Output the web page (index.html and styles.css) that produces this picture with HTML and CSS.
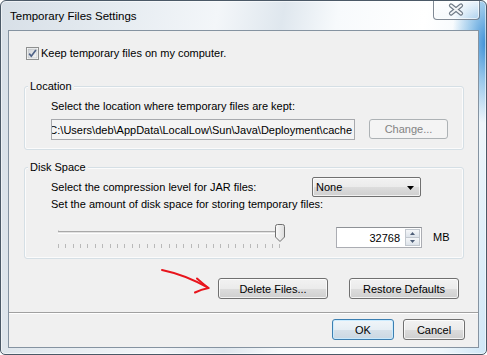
FILE: index.html
```html
<!DOCTYPE html>
<html lang="en">
<head>
    <meta charset="UTF-8">
    <title>Temporary Files Settings</title>
    <link rel="stylesheet" href="styles.css">
</head>
<body>
    <div class="window">
        <div class="titlebar">
            <span class="title">Temporary Files Settings</span>
            <div class="close">
                <svg width="45" height="19" viewBox="0 0 45 19">
                    <path d="M17 5.5L27 13.5M27 5.5L17 13.5" stroke="#6f7a86" stroke-width="4.2" stroke-linecap="round"/>
                    <path d="M17 5.5L27 13.5M27 5.5L17 13.5" stroke="#f3f5f7" stroke-width="2" stroke-linecap="round"/>
                </svg>
            </div>
        </div>

        <div class="client">
            <label class="check-row">
                <svg class="checkbox" width="13" height="13" viewBox="0 0 13 13">
                    <defs>
                        <linearGradient id="cbFill" x1="0" y1="0" x2="1" y2="1">
                            <stop offset="0" stop-color="#cfd2d6"/>
                            <stop offset="1" stop-color="#f6f6f6"/>
                        </linearGradient>
                    </defs>
                    <rect x="0.5" y="0.5" width="12" height="12" fill="#fff" stroke="#8e8f8f"/>
                    <rect x="2" y="2" width="9" height="9" fill="url(#cbFill)" stroke="#b4b8bc" stroke-width="0.6"/>
                    <path d="M3.2 6.6L5.3 9.2L9.9 3" fill="none" stroke="#4f6287" stroke-width="1.7"/>
                </svg>
                <span>Keep temporary files on my computer.</span>
            </label>

            <div class="group group-location">
                <div class="group-title">Location</div>
                <div class="line">Select the location where temporary files are kept:</div>
                <div class="loc-row">
                    <div class="field"><span>C:\Users\deb\AppData\LocalLow\Sun\Java\Deployment\cache</span></div>
                    <div class="btn btn-change is-disabled">Change...</div>
                </div>
            </div>

            <div class="group group-disk">
                <div class="group-title">Disk Space</div>
                <div class="jar-row">
                    <span>Select the compression level for JAR files:</span>
                    <div class="combo">
                        <span>None</span>
                        <svg width="7" height="4" viewBox="0 0 7 4"><path d="M0 0H7L3.5 4Z" fill="#000"/></svg>
                    </div>
                </div>
                <div class="line">Set the amount of disk space for storing temporary files:</div>
                <div class="space-row">
                    <svg class="slider" width="232" height="28" viewBox="0 0 232 28">
                        <defs>
                            <linearGradient id="thumbFill" x1="0" y1="0" x2="1" y2="0">
                                <stop offset="0" stop-color="#fbfbfb"/>
                                <stop offset="1" stop-color="#dcdcdc"/>
                            </linearGradient>
                        </defs>
                        <path d="M4.5 8.5V12" stroke="#b8b8b8"/>
                        <path d="M4 9.5H228" stroke="#a9a9a9"/>
                        <path d="M4 10.5H228" stroke="#e2e2e2"/>
                        <path d="M4 11.5H228" stroke="#fdfdfd"/>
                        <path d="M4.5 22v4M11.5 22v4M19.5 22v4M26.5 22v4M33.5 22v4M41.5 22v4M48.5 22v4M56.5 22v4M63.5 22v4M70.5 22v4M78.5 22v4M85.5 22v4M93.5 22v4M100.5 22v4M107.5 22v4M115.5 22v4M122.5 22v4M129.5 22v4M137.5 22v4M144.5 22v4M152.5 22v4M159.5 22v4M166.5 22v4M174.5 22v4M181.5 22v4M189.5 22v4M196.5 22v4M203.5 22v4M211.5 22v4M218.5 22v4M225.5 22v4" stroke="#b9b9b9"/>
                        <path d="M221.5 4.5Q221.5 2.5 223.5 2.5H228.5Q230.5 2.5 230.5 4.5V15L226 19.5L221.5 15Z" fill="url(#thumbFill)" stroke="#707070"/>
                    </svg>
                    <div class="spin">
                        <span class="spin-value">32768</span>
                        <div class="spin-buttons">
                            <div class="spin-btn"><svg width="5" height="3" viewBox="0 0 5 3"><path d="M0 3H5L2.5 0Z" fill="#4d5d77"/></svg></div>
                            <div class="spin-btn"><svg width="5" height="3" viewBox="0 0 5 3"><path d="M0 0H5L2.5 3Z" fill="#4d5d77"/></svg></div>
                        </div>
                    </div>
                    <span class="unit">MB</span>
                </div>
            </div>

            <div class="file-actions">
                <button class="btn btn-wide">Delete Files...</button>
                <button class="btn btn-wide">Restore Defaults</button>
            </div>

            <div class="separator"></div>

            <div class="dialog-actions">
                <button class="btn btn-small is-default">OK</button>
                <button class="btn btn-small">Cancel</button>
            </div>
        </div>

        <!-- red annotation arrow drawn over the dialog -->
        <svg class="annotation" width="487" height="355" viewBox="0 0 487 355">
            <path d="M162 270Q186 275 208.5 288" fill="none" stroke="#e8141c" stroke-width="2" stroke-linecap="round"/>
            <path d="M197 278.5Q203 284 208.5 288Q201 289.5 195 292.5" fill="none" stroke="#e8141c" stroke-width="2" stroke-linecap="round" stroke-linejoin="round"/>
        </svg>
    </div>
</body>
</html>
```

FILE: styles.css
```css
body {
    margin: 0;
    font-family: "Liberation Sans", Arial, sans-serif;
    font-size: 11px;
    color: #000;
    background: #fff;
}

.window {
    position: relative;
    box-sizing: border-box;
    width: 487px;
    height: 355px;
    padding: 0 7px 6px 7px;
    border: 1px solid #4b5967;
    border-radius: 6px 6px 5px 5px;
    background:
        radial-gradient(ellipse 34px 80px at 100% 12%, #3e90d6 0%, rgba(90, 165, 222, 0.6) 45%, rgba(255, 255, 255, 0) 100%),
        linear-gradient(100deg, #d7dfe7 0%, #e6ecf1 22%, #f3f6f9 40%, #dfe7ee 52%, #f7fafc 62%, #ffffff 78%, #eef6fb 92%, #cfe6f6 100%);
    box-shadow: inset 0 0 0 1px rgba(255, 255, 255, 0.55);
    overflow: hidden;
}

.titlebar {
    display: flex;
    justify-content: space-between;
    align-items: flex-start;
    height: 29px;
}

.title {
    margin: 8px 0 0 2px;
    font-size: 11.5px;
    line-height: 14px;
}

.close {
    box-sizing: border-box;
    width: 47px;
    height: 20px;
    margin: -1px -1px 0 0;
    border: 1px solid rgba(62, 76, 92, 0.65);
    border-top: none;
    border-radius: 0 0 4px 4px;
    background: linear-gradient(rgba(255, 255, 255, 0.75), rgba(235, 242, 248, 0.35));
    box-shadow: inset 0 0 0 1px rgba(255, 255, 255, 0.6);
}

.close svg {
    display: block;
}

.client {
    box-sizing: border-box;
    height: 318px;
    border: 1px solid #8593a1;
    background: #f0f0f0;
}

.line {
    margin: 1px 0 0 26px;
    line-height: 13px;
}

/* checkbox */
.check-row {
    display: flex;
    align-items: center;
    gap: 2px;
    height: 13px;
    margin: 16px 0 0 17px;
    line-height: 13px;
}

.checkbox {
    display: block;
}

/* group boxes */
.group {
    box-sizing: border-box;
    width: 440px;
    margin-left: 15px;
    border: 1px solid #d5dfe5;
    border-radius: 3px;
    box-shadow: inset 0 0 0 1px #fbfbfb;
}

.group-title {
    width: fit-content;
    height: 13px;
    margin: -7px 0 0 3px;
    padding: 0 2px;
    line-height: 13px;
    background: #f0f0f0;
}

.group-location {
    margin-top: 26px;
    padding-bottom: 9px;
}

.group-location .line {
    margin-top: 7px;
}

.loc-row {
    display: flex;
    align-items: flex-start;
    margin: 6px 0 0 26px;
}

.field {
    box-sizing: border-box;
    display: flex;
    justify-content: flex-end;
    align-items: center;
    width: 304px;
    height: 21px;
    padding-right: 2px;
    border: 1px solid #a7a9ad;
    background: #f4f4f4;
    white-space: nowrap;
    overflow: hidden;
}

.group-disk {
    margin-top: 17px;
    padding-bottom: 8px;
}

.jar-row {
    display: grid;
    grid-template-columns: 261px 109px;
    align-items: center;
    height: 20px;
    margin: 3px 0 0 26px;
}

.combo {
    box-sizing: border-box;
    display: flex;
    justify-content: space-between;
    align-items: center;
    height: 20px;
    padding: 0 6px 0 3px;
    border: 1px solid #707070;
    border-radius: 2px;
    background: linear-gradient(#f2f2f2 0%, #ebebeb 50%, #dddddd 50%, #cfcfcf 100%);
    box-shadow: inset 0 0 0 1px rgba(255, 255, 255, 0.7);
}

.combo svg {
    display: block;
    margin-top: 1px;
}

.space-row {
    display: flex;
    align-items: flex-start;
    height: 28px;
    margin: 11px 0 0 29px;
}

.slider {
    display: block;
}

.spin {
    box-sizing: border-box;
    display: flex;
    align-items: stretch;
    width: 86px;
    height: 21px;
    margin: 5px 0 0 50px;
    border: 1px solid #abadb3;
    border-top-color: #8e9196;
    background: #fff;
}

.spin-value {
    flex: 1;
    align-self: center;
    padding-right: 5px;
    text-align: right;
}

.spin-buttons {
    display: flex;
    flex-direction: column;
    width: 15px;
    margin: 1px 1px 1px 0;
}

.spin-btn {
    display: flex;
    flex: 1;
    justify-content: center;
    align-items: center;
    border: 1px solid #c2c8cf;
    background: linear-gradient(#f5f7f9, #dde3ea);
}

.spin-btn + .spin-btn {
    border-top: none;
}

.spin-btn svg {
    display: block;
}

.unit {
    margin: 9px 0 0 11px;
    line-height: 13px;
}

/* buttons */
.btn {
    box-sizing: border-box;
    display: flex;
    justify-content: center;
    align-items: center;
    height: 21px;
    padding: 0;
    border: 1px solid #707070;
    border-radius: 3px;
    background: linear-gradient(#f2f2f2 0%, #ebebeb 50%, #dddddd 50%, #cfcfcf 100%);
    box-shadow: inset 0 0 0 1px rgba(255, 255, 255, 0.75);
    font: inherit;
    color: #000;
}

.btn-change {
    width: 79px;
    height: 20px;
    margin-left: 14px;
}

.is-disabled {
    border-color: #adb2b5;
    background: #f4f4f4;
    box-shadow: none;
    color: #838383;
}

.file-actions {
    display: flex;
    gap: 21px;
    margin: 19px 0 0 209px;
}

.btn-wide {
    width: 110px;
}

.separator {
    margin-top: 13px;
    border-top: 1px solid #a0a0a0;
    border-bottom: 1px solid #fff;
}

.dialog-actions {
    display: flex;
    justify-content: flex-end;
    gap: 9px;
    margin-top: 5px;
    padding-right: 13px;
}

.btn-small {
    width: 62px;
}

.is-default {
    border-color: #3c7fb1;
    background: linear-gradient(#f0f5f9 0%, #e6eef4 50%, #d6e1ea 50%, #cad7e2 100%);
    box-shadow: inset 0 0 0 1px rgba(200, 235, 255, 0.9);
}

.annotation {
    position: absolute;
    left: -1px;
    top: -1px;
    pointer-events: none;
}
```
